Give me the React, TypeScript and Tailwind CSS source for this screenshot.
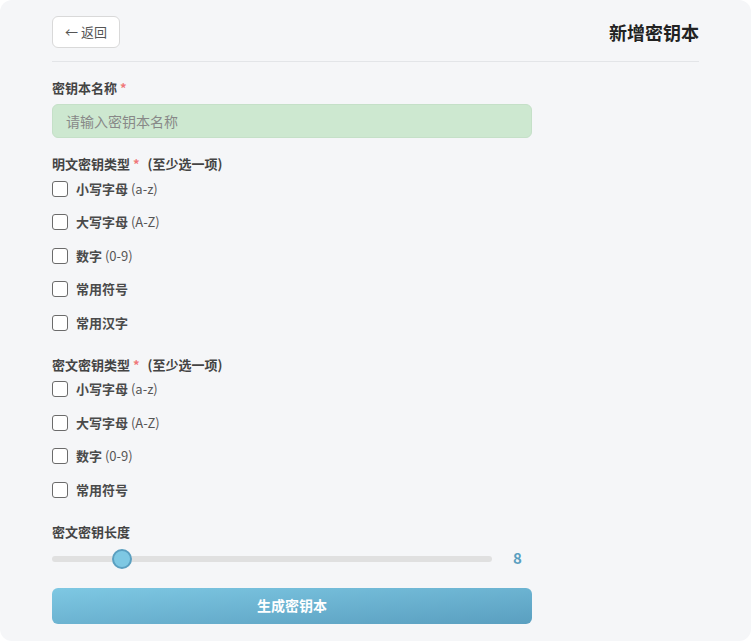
import React from "react";

const font = { fontFamily: '"Noto Sans CJK SC", "Noto Sans", sans-serif' };

function Box({ label, extra }: { label: string; extra?: string }) {
  return (
    <div className="flex h-[21.5px] items-center">
      <span className="box-border h-4 w-4 rounded-[3px] border-[1.5px] border-[#6b6b6b] bg-white" />
      <span className="ml-2 text-[13px] font-semibold leading-5 text-[#4a4a4a]">
        {label}
        {extra && <span className="font-normal text-[#555]"> {extra}</span>}
      </span>
    </div>
  );
}

function Group({ title, items }: { title: string; items: [string, string?][] }) {
  return (
    <div>
      <div className="h-5 text-[13px] font-bold leading-5 text-[#444]">
        {title} <span className="text-[#f07878]">*</span>
        <span className="ml-[8px]">(至少选一项)</span>
      </div>
      <div className="mt-[4px] flex flex-col gap-3">
        {items.map(([l, e]) => (
          <Box key={l} label={l} extra={e} />
        ))}
      </div>
    </div>
  );
}

export default function App() {
  return (
    <div className="h-[641px] w-[751px] bg-white" style={font}>
      <div className="box-border h-full w-full rounded-[12px] bg-[#f5f6f8] px-[52px] pt-4">
        <div className="flex items-center justify-between border-b border-[#e3e5e8] pb-[13px]">
          <button className="box-border flex h-8 w-[68px] items-center justify-center rounded-[6px] border border-[#d9d9d9] bg-white text-[13px] text-[#555]">
            <span className="mr-[3px]">←</span>返回
          </button>
          <div className="text-[18px] font-bold text-[#222]">新增密钥本</div>
        </div>

        <div className="mt-[16px] w-[480px]">
          <div className="h-5 text-[13px] font-bold leading-5 text-[#444]">
            密钥本名称 <span className="text-[#f07878]">*</span>
          </div>
          <div className="mt-[6px] box-border flex h-[34px] items-center rounded-[6px] border border-[#c5e0c8] bg-[#cde8d0] px-[13px] text-[14px] text-[#888]">
            请输入密钥本名称
          </div>
        </div>

        <div className="mt-4">
          <Group
            title="明文密钥类型"
            items={[
              ["小写字母", "(a-z)"],
              ["大写字母", "(A-Z)"],
              ["数字", "(0-9)"],
              ["常用符号"],
              ["常用汉字"],
            ]}
          />
        </div>

        <div className="mt-[21px]">
          <Group
            title="密文密钥类型"
            items={[
              ["小写字母", "(a-z)"],
              ["大写字母", "(A-Z)"],
              ["数字", "(0-9)"],
              ["常用符号"],
            ]}
          />
        </div>

        <div className="mt-[21px] w-[480px]">
          <div className="h-5 text-[13px] font-bold leading-5 text-[#444]">密文密钥长度</div>
          <div className="mt-[7px] flex h-5 items-center">
            <div className="relative h-[6px] w-[440px] rounded-full bg-[#e0e0e0]">
              <div className="absolute left-[60px] top-[-7px] box-border h-5 w-5 rounded-full border-2 border-[#5a9fc0] bg-[#7ec8e3]" />
            </div>
            <div className="ml-[21px] text-[15px] font-bold text-[#5a9fc0]">8</div>
          </div>
          <button className="mt-[19px] flex h-9 w-full items-center justify-center rounded-[6px] bg-gradient-to-br from-[#7ec8e3] to-[#5a9fc0] text-[14px] font-bold text-white">
            生成密钥本
          </button>
        </div>
      </div>
    </div>
  );
}
